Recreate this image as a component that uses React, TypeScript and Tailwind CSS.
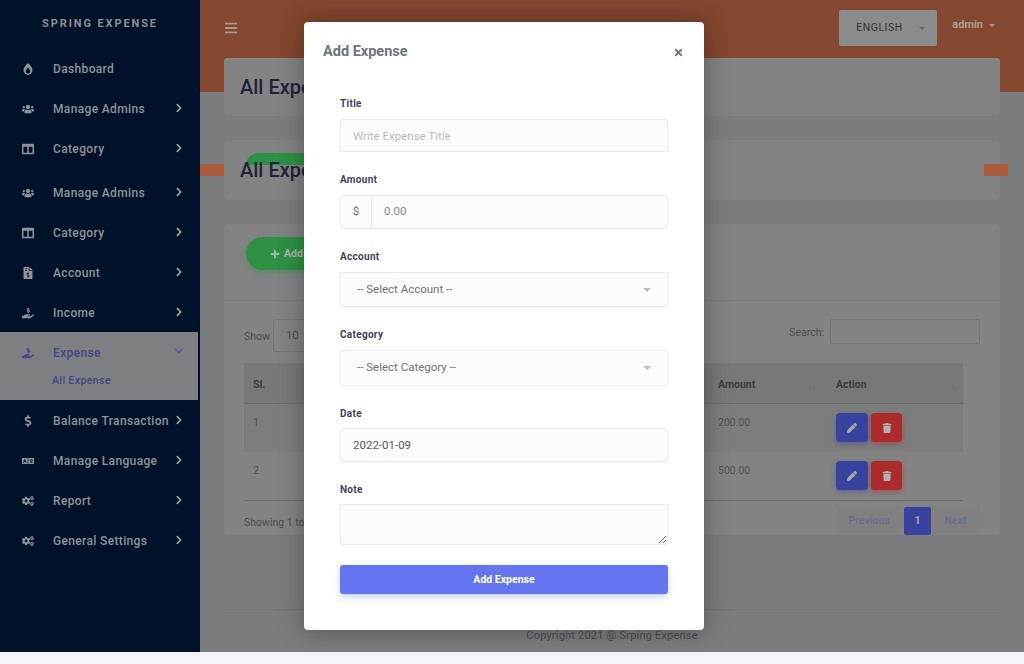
import {
  FaBars,
  FaBurn,
  FaChevronDown,
  FaChevronRight,
  FaCogs,
  FaColumns,
  FaDollarSign,
  FaFileInvoiceDollar,
  FaHandHoldingUsd,
  FaLanguage,
  FaPen,
  FaPlus,
  FaTimes,
  FaTrash,
  FaUsers,
} from 'react-icons/fa'
import type { IconType } from 'react-icons'

interface NavRowProps {
  icon: IconType
  label: string
  arrow?: boolean
  className?: string
}

function NavRow({ icon: Icon, label, arrow = true, className = '' }: NavRowProps) {
  return (
    <div className={`flex h-10 items-center pl-[21px] pr-[16px] text-[#8f9296] ${className}`}>
      <span className="flex w-[14px] justify-center">
        <Icon className="text-[12px]" />
      </span>
      <span className="ml-[18px] flex-1 text-[12px] font-medium tracking-[0.35px]">{label}</span>
      {arrow && <FaChevronRight className="-mt-[3px] text-[10px] text-[#a4a6a8]" />}
    </div>
  )
}

function Sidebar() {
  return (
    <aside className="w-[200px] shrink-0 bg-[#001229]">
      <div className="flex h-[49px] items-center justify-center pl-[-2px] text-[11px] font-bold tracking-[1.9px] text-[#8c8f93]">
        SPRING EXPENSE
      </div>
      <NavRow icon={FaBurn} label="Dashboard" arrow={false} />
      <NavRow icon={FaUsers} label="Manage Admins" />
      <NavRow icon={FaColumns} label="Category" />
      <NavRow icon={FaUsers} label="Manage Admins" className="mt-1" />
      <NavRow icon={FaColumns} label="Category" />
      <NavRow icon={FaFileInvoiceDollar} label="Account" />
      <NavRow icon={FaHandHoldingUsd} label="Income" />
      <div className="-mt-px mb-px h-[68px] w-[198px] bg-[#7e7f82]">
        <div className="flex h-10 items-center pl-[21px] pr-[14px] pt-px text-[#3f4788]">
          <span className="flex w-[14px] justify-center">
            <FaHandHoldingUsd className="text-[12px]" />
          </span>
          <span className="ml-[18px] flex-1 text-[12px] font-medium tracking-[0.35px]">Expense</span>
          <FaChevronDown className="-mt-[3px] text-[10px] text-[#5a6090]" />
        </div>
        <div className="pl-[52px] pt-[1px] text-[10.5px] font-medium tracking-[0.4px] text-[#3f4788]">
          All Expense
        </div>
      </div>
      <NavRow icon={FaDollarSign} label="Balance Transaction" />
      <NavRow icon={FaLanguage} label="Manage Language" />
      <NavRow icon={FaCogs} label="Report" />
      <NavRow icon={FaCogs} label="General Settings" />
    </aside>
  )
}

function TopBar() {
  return (
    <header className="flex h-[92px] shrink-0 items-start bg-[#84472f] pl-[24px] pr-[29px]">
      <FaBars className="mt-[21px] text-[14px] text-[#a39a94]" />
      <div className="ml-auto mt-[10px] flex h-9 w-[98px] items-center justify-between rounded-[2px] bg-[#8a8b8c] pl-[17px] pr-[12px] text-[10.5px] tracking-[0.5px] text-[#333538]">
        ENGLISH
        <span className="h-0 w-0 border-x-[3px] border-t-[3px] border-x-transparent border-t-[#666]" />
      </div>
      <div className="ml-[15px] mt-[17px] flex items-center gap-[6px] text-[11px] font-bold text-[#ab9c93]">
        admin
        <span className="h-0 w-0 border-x-[3.5px] border-t-[3.5px] border-x-transparent border-t-[#ab9c93]" />
      </div>
    </header>
  )
}

function SortArrows() {
  return <span className="text-[9px] tracking-[-1px] text-[#6e6e6e]">↑↓</span>
}

function ActionButtons() {
  return (
    <div className="flex gap-[3px] pt-[9px]">
      <span className="flex h-[29px] w-[32px] items-center justify-center rounded-[4px] bg-[#38439f] shadow-[0_2px_5px_rgba(56,67,159,0.5)]">
        <FaPen className="text-[10px] text-[#a8a9ad]" />
      </span>
      <span className="flex h-[29px] w-[31px] items-center justify-center rounded-[4px] bg-[#ab2a2a] shadow-[0_2px_5px_rgba(171,42,42,0.5)]">
        <FaTrash className="text-[10px] text-[#b0b0b4]" />
      </span>
    </div>
  )
}

const rows = [
  { sl: '1', amount: '200.00', tint: 'bg-[#7d7d7d]' },
  { sl: '2', amount: '500.00', tint: '' },
]

function ExpenseTable() {
  return (
    <div className="rounded-[3px] bg-[#838383]">
      <div className="relative h-[77px] border-b border-[#7c7c7c]">
        <span className="absolute left-[22px] top-[13px] flex h-[33px] w-[100px] items-center gap-1 rounded-full bg-[#2d9044] pl-[24px] text-[10.5px] font-bold text-[#a9b6ab] shadow-[0_3px_6px_rgba(45,144,68,0.4)]">
          <FaPlus className="text-[10px]" />
          Add
        </span>
      </div>
      <div className="px-5 pt-[18px]">
        <div className="flex h-[34px] items-start text-[10.5px] text-[#4c4c4c]">
          <span className="mt-[10px]">Show</span>
          <span className="ml-[3px] flex h-[33px] w-[50px] items-center rounded-[2px] border border-[#747474] pl-[12px] text-[11.5px]">
            10
          </span>
          <span className="ml-auto mt-[6px]">Search:</span>
          <span className="ml-[6px] h-[25px] w-[150px] rounded-[2px] border border-[#747474]" />
        </div>
        <div className="mt-[10px] ml-0 w-[719px]">
          <div className="flex h-[41px] border-b border-[#6c6c6c] bg-[#787878] text-[10.5px] font-bold text-[#3c3c3c]">
            <span className="w-[474px] pl-[9px] pt-[14px]">Sl.</span>
            <span className="relative w-[118px] pt-[14px]">
              Amount
              <span className="absolute right-[21px] top-[16px]"><SortArrows /></span>
            </span>
            <span className="relative flex-1 pt-[14px]">
              Action
              <span className="absolute right-[5px] top-[16px]"><SortArrows /></span>
            </span>
          </div>
          {rows.map((row) => (
            <div key={row.sl} className={`flex h-[48px] text-[10.5px] text-[#515151] ${row.tint}`}>
              <span className="w-[474px] pl-[9px] pt-[11px]">{row.sl}</span>
              <span className="w-[118px] pt-[11px]">{row.amount}</span>
              <ActionButtons />
            </div>
          ))}
          <div className="border-t border-[#6c6c6c]" />
        </div>
        <div className="flex items-start pt-[6px] text-[10.5px] text-[#4c4c4c]">
          <span className="mt-[8px]">Showing 1 to</span>
          <div className="ml-auto flex h-[28px] items-center text-[10.5px] font-bold">
            <span className="flex h-full w-[62px] items-center justify-center rounded-l-[3px] bg-[#808080] text-[#6a6e8e]">
              Previous
            </span>
            <span className="ml-[4px] flex h-full w-[27px] items-center justify-center rounded-[2px] bg-[#38439f] text-[#a8a9ad]">
              1
            </span>
            <span className="flex h-full w-[49px] items-center justify-center rounded-r-[3px] bg-[#808080] text-[#6a6e8e]">
              Next
            </span>
          </div>
        </div>
      </div>
    </div>
  )
}

function Content() {
  return (
    <main className="relative flex min-w-0 flex-1 flex-col overflow-hidden bg-[#7b7c7e]">
      <TopBar />
      <div className="-mt-[34px] flex flex-col gap-6 px-6">
        <div className="flex h-[58px] items-center rounded-[3px] bg-[#838383] pl-4 text-[20px] font-medium text-[#20233a]">
          All Expense
        </div>
        <div className="relative flex h-[60px] items-center rounded-[3px] bg-[#838383] pl-4 text-[20px] font-medium text-[#20233a]">
          <span className="absolute left-[22px] top-[13px] h-[12px] w-[100px] rounded-tl-[24px] bg-[#2d9044]" />
          <span className="relative">All Expense</span>
        </div>
        <div className="h-[330px]">
          <ExpenseTable />
        </div>
      </div>
      {/* orange sliver that pokes out either side of the second heading card */}
      <span className="absolute left-0 top-[164px] h-3 w-6 bg-[#ab5a3c]" />
      <span className="absolute left-[784px] top-[164px] h-3 w-6 bg-[#ab5a3c]" />
      <footer className="mx-6 mt-[55px] border-t border-[#747576] pt-[18px] text-center text-[11px] tracking-[0.2px] text-[#4b4c4e]">
        Copyright 2021 @ Srping Expense
      </footer>
    </main>
  )
}

const fieldBox = 'w-full rounded-[3px] border border-[#e9e9f3] bg-[#fcfcff] text-[11.5px] text-[#6f737a] outline-none'

function Field({ label, className = 'mt-[22px]', gap = 'mb-[9px]', children }: { label: string; className?: string; gap?: string; children: React.ReactNode }) {
  return (
    <div className={className}>
      <div className={`h-3 text-[10px] font-bold leading-3 tracking-[0.3px] text-[#3f4258] ${gap}`}>{label}</div>
      {children}
    </div>
  )
}

function FakeSelect({ text, height }: { text: string; height: string }) {
  return (
    <div className={`${fieldBox} ${height} flex items-center justify-between pl-4 pr-[16px] text-[10.5px]`}>
      {text}
      <span className="h-0 w-0 border-x-[4px] border-t-[4px] border-x-transparent border-t-[#bdbdbd]" />
    </div>
  )
}

function AddExpenseModal() {
  return (
    <div className="absolute left-[304px] top-[22px] h-[608px] w-[400px] rounded-[4px] bg-white shadow-[0_0_24px_rgba(0,0,0,0.35)]">
      <div className="flex h-[60px] items-center justify-between pl-[19px] pr-[20px]">
        <h2 className="text-[14.5px] font-bold text-[#6c757d]">Add Expense</h2>
        <FaTimes className="text-[11px] text-[#6c757d]" />
      </div>
      <form className="px-9 pt-4">
        <Field label="Title" className="">
          <input className={`${fieldBox} h-[33px] px-3`} placeholder="Write Expense Title" readOnly />
        </Field>
        <Field label="Amount">
          <div className={`${fieldBox} flex h-[34px] items-center`}>
            <span className="flex h-full w-[31px] items-center justify-center border-r border-[#e9e9f3] text-[#6f737a]">$</span>
            <span className="pl-3 text-[#85888e]">0.00</span>
          </div>
        </Field>
        <Field label="Account">
          <FakeSelect text="-- Select Account --" height="h-[35px]" />
        </Field>
        <Field label="Category">
          <FakeSelect text="-- Select Category --" height="h-9" />
        </Field>
        <Field label="Date" gap="mb-2">
          <input className={`${fieldBox} h-[34px] px-3 text-[#565a60]`} value="2022-01-09" readOnly />
        </Field>
        <Field label="Note" gap="mb-2">
          <textarea className={`${fieldBox} block h-[41px]`} readOnly />
        </Field>
        <button type="button" className="mt-5 h-[29px] w-full rounded-[3px] bg-[#6475ef] text-[10.5px] font-bold text-white shadow-[0_3px_6px_rgba(100,117,239,0.35)]">
          Add Expense
        </button>
      </form>
    </div>
  )
}

export default function App() {
  return (
    <div className="relative h-screen overflow-hidden bg-[#f4f5fa] font-['Roboto',sans-serif]">
      <div className="flex h-[652px]">
        <Sidebar />
        <Content />
      </div>
      <AddExpenseModal />
    </div>
  )
}
